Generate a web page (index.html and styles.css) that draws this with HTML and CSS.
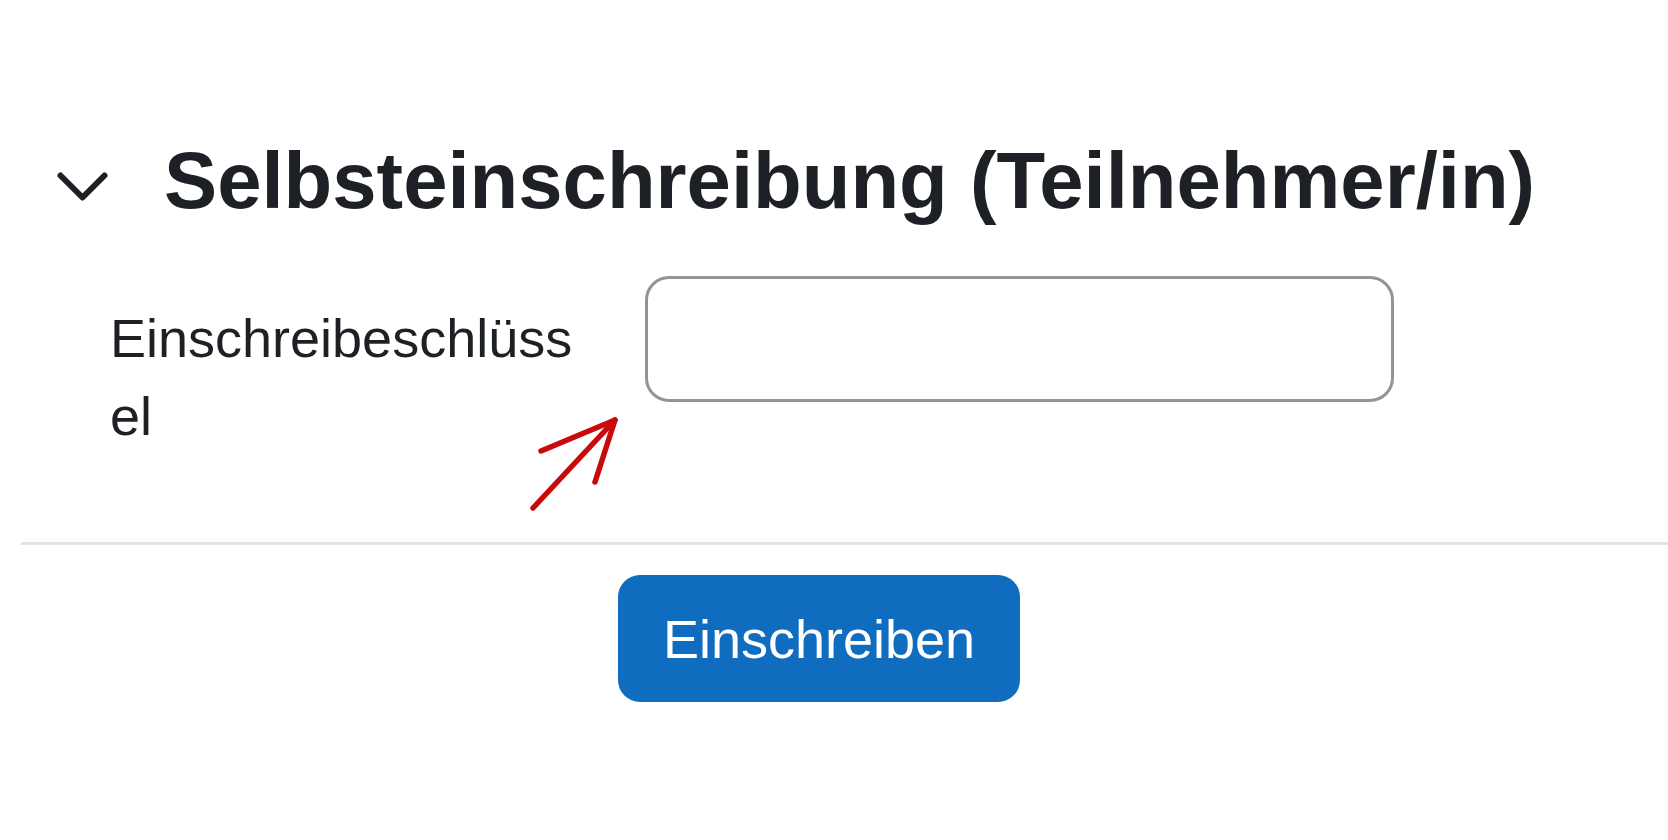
FILE: index.html
```html
<!DOCTYPE html>
<html lang="de">
<head>
<meta charset="utf-8">
<title>Selbsteinschreibung</title>
<link rel="stylesheet" href="styles.css">
</head>
<body>
<main class="page">
  <section class="enrol">
    <header class="enrol-head">
      <svg class="chev" width="53" height="31" viewBox="0 0 53 31" aria-hidden="true"><polyline points="4.5,4.5 26.5,26.5 48.5,4.5" fill="none" stroke="#1d2125" stroke-width="6" stroke-linecap="round" stroke-linejoin="round"/></svg>
      <h2 class="title">Selbsteinschreibung (Teilnehmer/in)</h2>
    </header>
    <div class="form-row">
      <label class="label" for="key">Einschreibeschlüssel</label>
      <input class="field" id="key" type="password">
      <svg class="arrow" width="100" height="104" viewBox="0 0 100 104" aria-hidden="true"><g fill="none" stroke="#c80a0a" stroke-width="5.5" stroke-linecap="round" stroke-linejoin="round"><line x1="8" y1="96" x2="90" y2="8"/><polyline points="16,39 90,8 70,70"/></g></svg>
    </div>
  </section>
  <hr class="divider">
  <div class="actions">
    <button class="btn" type="button">Einschreiben</button>
  </div>
</main>
</body>
</html>
```
FILE: styles.css
```css
html, body {
  margin: 0;
  padding: 0;
  background: #ffffff;
}
body {
  font-family: "Liberation Sans", Arial, sans-serif;
  color: #1d2125;
}
.page {
  padding: 133px 0 0 21px;
}
.enrol-head {
  display: flex;
  align-items: flex-start;
  margin-left: 35px;
  gap: 55px;
}
.chev {
  flex: none;
  margin-top: 38px;
}
.title {
  margin: 0;
  font-size: 79.7px;
  line-height: 95px;
  font-weight: 700;
  color: #1d2125;
  white-space: nowrap;
}
.form-row {
  position: relative;
  display: flex;
  align-items: flex-start;
  margin-top: 48px;
  margin-left: 89px;
  gap: 67px;
  margin-bottom: 87px;
}
.label {
  flex: none;
  width: 468px;
  padding-top: 23px;
  font-size: 54px;
  line-height: 78px;
  word-break: break-all;
  color: #1d2125;
}
.field {
  flex: none;
  box-sizing: border-box;
  width: 749px;
  height: 126px;
  border: 3px solid #939398;
  border-radius: 24px;
  background: #fff;
  outline: none;
  padding: 0 24px;
  font: inherit;
  font-size: 54px;
}
.arrow {
  position: absolute;
  left: 415px;
  top: 136px;
}
.divider {
  margin: 0;
  border: 0;
  height: 3px;
  background: #e2e3e5;
}
.actions {
  padding: 30px 0 0 597px;
}
.btn {
  box-sizing: border-box;
  width: 402px;
  height: 127px;
  border: 0;
  border-radius: 22px;
  background: #0f6cbf;
  color: #ffffff;
  font-family: "Liberation Sans", Arial, sans-serif;
  font-size: 54px;
  padding: 0;
  display: flex;
  align-items: center;
  justify-content: center;
}
```
